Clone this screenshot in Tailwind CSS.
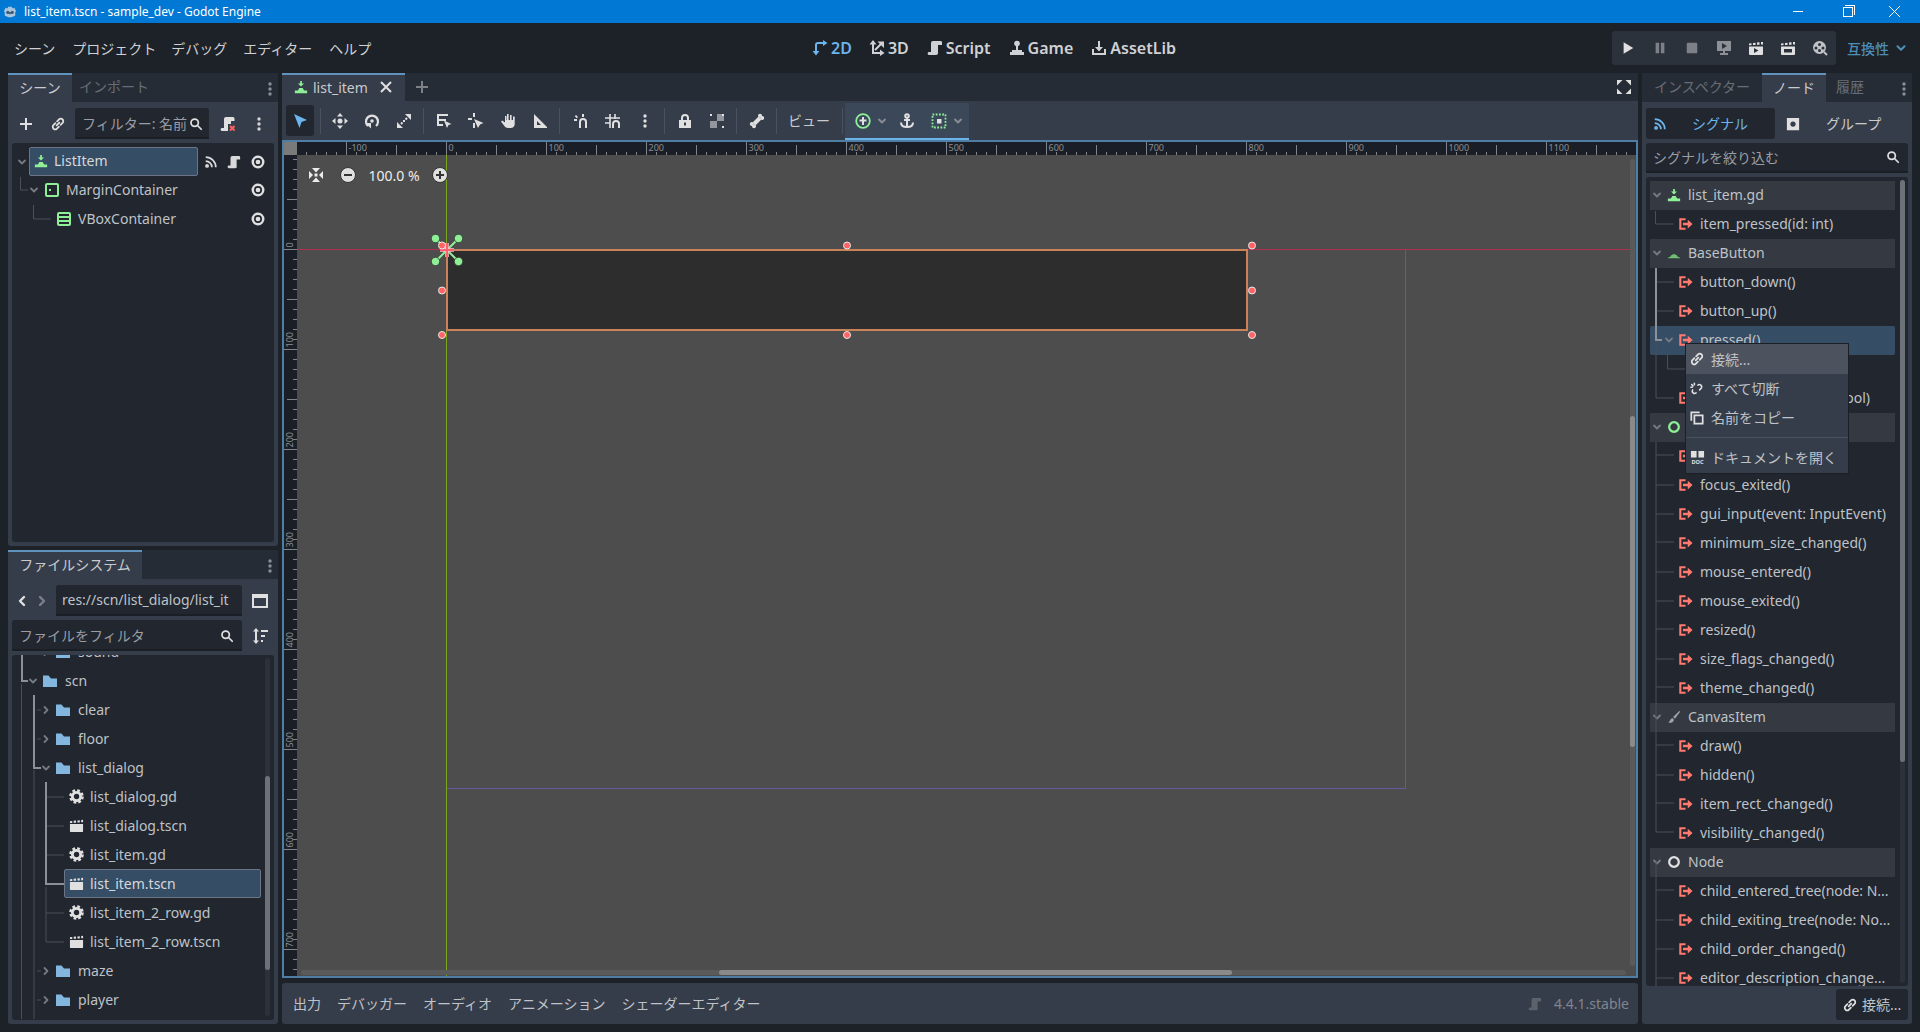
<!DOCTYPE html>
<html lang="ja">
<head>
<meta charset="UTF-8">
<title>list_item.tscn - sample_dev - Godot Engine</title>
<script src="https://cdn.jsdelivr.net/npm/@tailwindcss/browser@4"></script>
</head>
<body class="w-[1920px] h-[1032px] overflow-hidden bg-[#1d2229] text-[14px] text-[#bfc2c7] font-['Noto_Sans','Noto_Sans_CJK_JP',sans-serif] flex flex-col">

<!-- icon set -->
<svg class="hidden">
  <symbol id="godot" viewBox="0 0 16 16"><path fill="currentColor" d="M3 3l2 1 1-2h4l1 2 2-1 2 4-1 1v4c-2 1.500-4 2-6 2s-4-.5-6-2V8L1 7z"/><circle cx="5.500" cy="8.500" r="1.800" fill="#3a5a78"/><circle cx="10.500" cy="8.500" r="1.800" fill="#3a5a78"/><rect x="7" y="8" width="2" height="2.500" fill="#3a5a78"/></symbol>
  <symbol id="plus" viewBox="0 0 16 16"><path fill="currentColor" d="M7 2h2v5h5v2H9v5H7V9H2V7h5z"/></symbol>
  <symbol id="link" viewBox="0 0 16 16"><g fill="none" stroke="currentColor" stroke-width="2" stroke-linecap="round"><path d="M7 5l2.200-2.200a2.700 2.700 0 0 1 4 4L11 9"/><path d="M9 11l-2.200 2.200a2.700 2.700 0 0 1-4-4L5 7"/><path d="M6.500 9.500l3-3"/></g></symbol>
  <symbol id="unlink" viewBox="0 0 16 16"><g fill="none" stroke="currentColor" stroke-width="1.800" stroke-linecap="round"><path d="M9 3.500a2.700 2.700 0 0 1 4 3.500L11 9"/><path d="M7 12.500a2.700 2.700 0 0 1-4-3.500"/><path d="M2 3l1.500 1.500M5 1.500V3M1 6h1.500"/></g></symbol>
  <symbol id="search" viewBox="0 0 16 16"><g fill="none" stroke="currentColor" stroke-width="2" stroke-linecap="round"><circle cx="6.500" cy="6.500" r="4.200"/><path d="M10 10l4 4"/></g></symbol>
  <symbol id="kebab" viewBox="0 0 16 16"><g fill="currentColor"><circle cx="8" cy="3" r="1.700"/><circle cx="8" cy="8" r="1.700"/><circle cx="8" cy="13" r="1.700"/></g></symbol>
  <symbol id="chevd" viewBox="0 0 16 16"><path fill="none" stroke="currentColor" stroke-width="2.400" stroke-linecap="round" stroke-linejoin="round" d="M4 6l4 4 4-4"/></symbol>
  <symbol id="chevr" viewBox="0 0 16 16"><path fill="none" stroke="currentColor" stroke-width="2.400" stroke-linecap="round" stroke-linejoin="round" d="M6 4l4 4-4 4"/></symbol>
  <symbol id="eye" viewBox="0 0 16 16"><circle cx="8" cy="8" r="6" fill="none" stroke="currentColor" stroke-width="2.800"/><circle cx="8" cy="8" r="2.700" fill="currentColor"/></symbol>
  <symbol id="signal" viewBox="0 0 16 16"><circle cx="3.500" cy="12.500" r="2.200" fill="currentColor"/><g fill="none" stroke="currentColor" stroke-width="2"><path d="M2 7a7 7 0 0 1 7 7"/><path d="M2 2.500A11.500 11.500 0 0 1 13.500 14"/></g></symbol>
  <symbol id="script" viewBox="0 0 16 16"><path fill="currentColor" d="M6 1h8a1.500 1.500 0 0 1 1 1.500V5h-4v7.500A2 2 0 0 1 9 15H2a1.500 1.500 0 0 1-1-2.500c.3-.4.800-.5 1.500-.5H4V3a2 2 0 0 1 2-2z"/></symbol>
  <symbol id="scriptx" viewBox="0 0 16 16"><path fill="#e0e0e0" d="M6 1h7a1.500 1.500 0 0 1 1.500 1.500V5H11v3H8v7H2a1.500 1.500 0 0 1-1-2.500c.3-.4.800-.5 1.500-.5H4V3a2 2 0 0 1 2-2z"/><path fill="none" stroke="#ff5f5f" stroke-width="2" d="M10 10l4.500 4.500M14.500 10L10 14.500"/></symbol>
  <symbol id="node-root" viewBox="0 0 16 16"><path fill="currentColor" d="M7 1h2v3h2.500L8 7.500 4.500 4H7zM6 9h4l1.500 3H15v3H1v-3h3.500z"/></symbol>
  <symbol id="node-dome" viewBox="0 0 16 16"><path fill="currentColor" d="M1 14c.5-1 1-1.500 2.500-1.500C4.500 10.500 6 9.500 8 9.500s3.500 1 4.500 3c1.500 0 2 .5 2.500 1.500z"/></symbol>
  <symbol id="margin" viewBox="0 0 16 16"><rect x="2" y="2" width="12" height="12" rx="1" fill="none" stroke="currentColor" stroke-width="2"/><rect x="5" y="7" width="2" height="2" fill="currentColor"/></symbol>
  <symbol id="vbox" viewBox="0 0 16 16"><g fill="none" stroke="currentColor" stroke-width="2"><rect x="2" y="2" width="12" height="12" rx="1"/><path d="M2 6h12M2 10h12"/></g></symbol>
  <symbol id="folder" viewBox="0 0 16 16"><path fill="currentColor" d="M1 2.500h5.500L9 5.500h6V14H1z"/></symbol>
  <symbol id="gear" viewBox="0 0 16 16"><circle cx="8" cy="8" r="4.400" fill="none" stroke="currentColor" stroke-width="3"/><circle cx="8" cy="8" r="6.500" fill="none" stroke="currentColor" stroke-width="2.600" stroke-dasharray="2.900 2.200"/></symbol>
  <symbol id="clap" viewBox="0 0 16 16"><path fill="currentColor" d="M1 6.500h14V14a1 1 0 0 1-1 1H2a1 1 0 0 1-1-1z"/><path fill="currentColor" d="M1 3.500l2.500-.3v2H1zM5 3l2.500-.3v2.300H5zM9 2.600l2.500-.3v2.500H9zM13 2.100l2-.2v2.700h-2z"/></symbol>
  <symbol id="clapplay" viewBox="0 0 16 16"><path fill="currentColor" d="M1 6.500h14V14a1 1 0 0 1-1 1H2a1 1 0 0 1-1-1zM6 8v5l4.500-2.500z" fill-rule="evenodd"/><path fill="currentColor" d="M1 3.500l2.500-.3v2H1zM5 3l2.500-.3v2.300H5zM9 2.600l2.500-.3v2.500H9zM13 2.100l2-.2v2.700h-2z"/></symbol>
  <symbol id="clapopen" viewBox="0 0 16 16"><path fill="currentColor" d="M1 6.500h14V14a1 1 0 0 1-1 1H2a1 1 0 0 1-1-1zM4 9v3.500h8V9z" fill-rule="evenodd"/><path fill="currentColor" d="M1 3.500l2.500-.3v2H1zM5 3l2.500-.3v2.300H5zM9 2.600l2.500-.3v2.500H9zM13 2.100l2-.2v2.700h-2z"/></symbol>
  <symbol id="movie" viewBox="0 0 16 16"><path fill="currentColor" fill-rule="evenodd" d="M7.500 1a6.500 6.500 0 1 1 0 13 6.500 6.500 0 0 1 0-13zM7.500 3a1.500 1.500 0 1 0 0 3 1.500 1.500 0 0 0 0-3zM4 6.500a1.500 1.500 0 1 0 0 3 1.500 1.500 0 0 0 0-3zM11 6.500a1.500 1.500 0 1 0 0 3 1.500 1.500 0 0 0 0-3zM7.500 9a1.500 1.500 0 1 0 0 3 1.500 1.500 0 0 0 0-3z"/><path stroke="currentColor" stroke-width="2" d="M12 12l3 3"/></symbol>
  <symbol id="play" viewBox="0 0 16 16"><path fill="currentColor" d="M3 1.500l11 6.500-11 6.500z"/></symbol>
  <symbol id="pause" viewBox="0 0 16 16"><path fill="currentColor" d="M3 2h4v12H3zM9 2h4v12H9z"/></symbol>
  <symbol id="stop" viewBox="0 0 16 16"><rect x="2" y="2" width="12" height="12" rx="1" fill="currentColor"/></symbol>
  <symbol id="remote" viewBox="0 0 16 16"><path fill="currentColor" fill-rule="evenodd" d="M1 1h14v10H9v2h3v2H4v-2h3v-2H1zM6 3v6l5-3z"/></symbol>
  <symbol id="d2" viewBox="0 0 16 16"><path fill="none" stroke="currentColor" stroke-width="2" d="M4 12V5a2 2 0 0 1 2-2h5"/><path fill="currentColor" d="M11 0l4.500 3L11 6zM.5 11h7L4 15.500z"/></symbol>
  <symbol id="d3" viewBox="0 0 16 16"><path fill="none" stroke="currentColor" stroke-width="2" d="M4 4v9h7M13 3L6 10"/><path fill="currentColor" d="M4 0l3.500 4.500h-7zM11 9.500l4.500 3.500-4.500 3zM8.500 1.500H15V8z"/></symbol>
  <symbol id="game" viewBox="0 0 16 16"><circle cx="8" cy="3.500" r="2.800" fill="currentColor"/><path fill="currentColor" d="M7 5h2v5h4v2h2v3H1v-3h2v-2h4z"/></symbol>
  <symbol id="asset" viewBox="0 0 16 16"><path fill="currentColor" d="M7 1h2v6h3l-4 4.500L4 7h3zM1 9h2v4h10V9h2v6H1z"/></symbol>
  <symbol id="cursor" viewBox="0 0 16 16"><path fill="currentColor" d="M2 1l13 6-5.500 2L7.500 15z"/></symbol>
  <symbol id="move" viewBox="0 0 16 16"><path fill="currentColor" d="M8 0l3 3.500H5zM8 16l-3-3.500h6zM0 8l3.500-3v6zM16 8l-3.500 3V5z"/><circle cx="8" cy="8" r="2.500" fill="currentColor"/></symbol>
  <symbol id="rotate" viewBox="0 0 16 16"><path fill="none" stroke="currentColor" stroke-width="2.200" d="M4 13a6 6 0 1 1 8 0"/><circle cx="8" cy="8" r="1.800" fill="currentColor"/><path fill="currentColor" d="M1 10h6v5.500z"/></symbol>
  <symbol id="scale" viewBox="0 0 16 16"><path fill="currentColor" d="M9 1h6v6zM1 9l6 6H1z"/><path stroke="currentColor" stroke-width="2" d="M11 5L9.500 6.500M5 11l1.500-1.500"/><rect x="7" y="7" width="2" height="2" fill="currentColor"/></symbol>
  <symbol id="listsel" viewBox="0 0 16 16"><path fill="currentColor" d="M1 1h11v2H3v3h7v2H3v3h4v2H1z"/><path fill="currentColor" d="M8 7.500l7.500 3.500-3 1-1.500 3z"/></symbol>
  <symbol id="pivot" viewBox="0 0 16 16"><path fill="currentColor" d="M5 0h2v4H5zM0 5h4v2H0z"/><path fill="currentColor" d="M6 6l9.500 4-3.500 1.500L10 15z"/><path fill="currentColor" d="M5 10h2v5H5z"/></symbol>
  <symbol id="pan" viewBox="0 0 16 16"><path fill="currentColor" d="M7 1h1.600v6H10V2h1.600v5H13V3.500h1.700V11c0 2.500-1.800 4-4 4H8c-2 0-3-1-4-2.500L1 8.500l1.300-1L5 9.500V3h1.500v4H7z"/></symbol>
  <symbol id="ruler" viewBox="0 0 16 16"><path fill="currentColor" fill-rule="evenodd" d="M2 1l13 13v1H2zM5 8v4h4z"/></symbol>
  <symbol id="snap" viewBox="0 0 16 16"><path fill="none" stroke="currentColor" stroke-width="2" d="M7 15V9a3 3 0 0 1 6 0v6"/><path fill="currentColor" d="M9 1h2v3H9zM1 6h3v2H1zM3 2l2 2-1.200 1.200-2-2z"/></symbol>
  <symbol id="grid" viewBox="0 0 16 16"><path stroke="currentColor" stroke-width="1.600" fill="none" d="M5 1v14M10 1v5M0 5h15M0 10h5"/><path fill="none" stroke="currentColor" stroke-width="2" d="M8 15v-4a3 3 0 0 1 6 0v4"/></symbol>
  <symbol id="lock" viewBox="0 0 16 16"><path fill="none" stroke="currentColor" stroke-width="2" d="M5 8V5a3 3 0 0 1 6 0v3"/><path fill="currentColor" fill-rule="evenodd" d="M2 7h12v8H2zM7 9.500v3h2v-3z"/></symbol>
  <symbol id="grp" viewBox="0 0 16 16"><path fill="currentColor" opacity=".55" d="M1 8h7V1h7v7H8v7H1z"/><path fill="currentColor" d="M1 1h2v2H1zM13 13h2v2h-2zM13 1h2v2h-2z"/></symbol>
  <symbol id="bone" viewBox="0 0 16 16"><path stroke="currentColor" stroke-width="4" d="M5 11l6-6"/><g fill="currentColor"><circle cx="11" cy="2.800" r="2"/><circle cx="13.200" cy="5" r="2"/><circle cx="2.800" cy="11" r="2"/><circle cx="5" cy="13.200" r="2"/></g></symbol>
  <symbol id="anchor" viewBox="0 0 16 16"><g fill="none" stroke="currentColor" stroke-width="2"><circle cx="8" cy="3" r="1.800"/><path d="M8 5v9M5 7h6M2 9.500c0 3 2.500 4.500 6 4.500s6-1.500 6-4.500"/></g></symbol>
  <symbol id="container" viewBox="0 0 16 16"><rect x="1.500" y="1.500" width="13" height="13" fill="none" stroke="#8eef97" stroke-width="1.800" stroke-dasharray="1.800 1.450"/><rect x="6" y="6" width="4.500" height="4.500" fill="#e0e0e0"/></symbol>
  <symbol id="ringplus" viewBox="0 0 16 16"><circle cx="8" cy="8" r="6.800" fill="none" stroke="#8eef97" stroke-width="1.800"/><path fill="#e0e0e0" d="M7 4h2v2.500h2.500v2H9V12H7V8.500H4.500v-2H7z"/></symbol>
  <symbol id="expand" viewBox="0 0 16 16"><path fill="currentColor" d="M1 1h5.500L1 6.500zM15 1v5.500L9.500 1zM1 15V9.500L6.500 15zM15 15H9.500L15 9.500z"/></symbol>
  <symbol id="center" viewBox="0 0 16 16"><path fill="currentColor" d="M4 1h8L8 5.500zM4 15h8L8 10.500zM1 4l4 4-4 4zM15 4l-4 4 4 4z"/><rect x="6.500" y="6.500" width="3" height="3" fill="currentColor"/></symbol>
  <symbol id="sig" viewBox="0 0 16 16"><path fill="none" stroke="currentColor" stroke-width="2.400" d="M7.500 2.500H1.500v11h6"/><path fill="currentColor" d="M4.500 6.500H10V3l5.500 5L10 13V9.500H4.500z"/></symbol>
  <symbol id="ring" viewBox="0 0 16 16"><circle cx="8" cy="8" r="5.500" fill="none" stroke="currentColor" stroke-width="2.600"/></symbol>
  <symbol id="brush" viewBox="0 0 16 16"><path fill="currentColor" d="M14 1l1 1-6 8-2-2zM6 9l2 2c-1 3-3 4-6.500 3.500C3 13.500 3.500 10 6 9z"/></symbol>
  <symbol id="group" viewBox="0 0 16 16"><path fill="currentColor" fill-rule="evenodd" d="M1 1h14v14H1zM8 5a3 3 0 1 0 0 6 3 3 0 0 0 0-6z"/></symbol>
  <symbol id="split" viewBox="0 0 16 16"><path fill="none" stroke="currentColor" stroke-width="2" d="M1 2h14v12H1zM1 4h14"/></symbol>
  <symbol id="sort" viewBox="0 0 16 16"><path fill="currentColor" d="M4 0l3 3.500H5v9h2L4 16l-3-3.500h2v-9H1zM9 2h7v2H9zM9 7h4v2H9zM9 12h2v2H9z"/></symbol>
  <symbol id="copy" viewBox="0 0 16 16"><path fill="none" stroke="currentColor" stroke-width="2" d="M1.500 11V1.500H11M5 5h9.500v9.500H5z"/></symbol>
  <symbol id="doc" viewBox="0 0 16 16"><path fill="currentColor" d="M1 1h6v7H1zM9 1h6v7H9z"/><text x="8" y="15" font-size="6" font-weight="700" text-anchor="middle" fill="currentColor" font-family="Noto Sans">DOC</text></symbol>
</svg>

<!-- title bar -->
<header class="h-[23px] shrink-0 bg-[#0078d4] text-white text-[12px] flex items-center">
  <svg class="w-[14px] h-[14px] ml-[3px] text-[#a9c6dd]"><use href="#godot"/></svg>
  <span class="ml-[7px]">list_item.tscn - sample_dev - Godot Engine</span>
  <div class="ml-auto flex items-center">
    <span class="w-[10px] h-px bg-white mr-[40px]"></span>
    <span class="relative w-[10px] h-[10px] border border-white mr-[36px]"><span class="absolute -top-[3px] left-[1px] w-[10px] h-[10px] border-t border-r border-white"></span></span>
    <svg class="w-[11px] h-[11px] mr-[20px]" viewBox="0 0 11 11"><path stroke="#fff" d="M0 0l11 11M11 0L0 11"/></svg>
  </div>
</header>

<!-- menu bar -->
<nav class="h-[50px] shrink-0 flex items-center text-[#cfd1d4]">
  <div class="w-[800px] flex pl-[14px]">
    <span>シーン</span><span class="ml-[17px]">プロジェクト</span><span class="ml-[15px]">デバッグ</span><span class="ml-[16px]">エディター</span><span class="ml-[17px]">ヘルプ</span>
  </div>
  <div class="flex items-center text-[16px] font-semibold pl-[12px]">
    <svg class="w-4 h-4 text-[#6cb4ec]"><use href="#d2"/></svg><span class="ml-[3px] text-[#6cb4ec]">2D</span>
    <svg class="w-4 h-4 ml-[17px]"><use href="#d3"/></svg><span class="ml-[3px]">3D</span>
    <svg class="w-4 h-4 ml-[18px]"><use href="#script"/></svg><span class="ml-[3px]">Script</span>
    <svg class="w-4 h-4 ml-[18px]"><use href="#game"/></svg><span class="ml-[3px]">Game</span>
    <svg class="w-4 h-4 ml-[18px]"><use href="#asset"/></svg><span class="ml-[3px]">AssetLib</span>
  </div>
  <div class="ml-auto flex items-center">
    <div class="w-[224px] h-[34px] rounded-[3px] bg-[#2c323c] flex items-center text-[#e0e0e0]">
      <span class="w-8 flex justify-center"><svg class="w-[14px] h-[14px]"><use href="#play"/></svg></span>
      <span class="w-8 flex justify-center"><svg class="w-[14px] h-[14px] text-[#7d8087]"><use href="#pause"/></svg></span>
      <span class="w-8 flex justify-center"><svg class="w-[14px] h-[14px] text-[#7d8087]"><use href="#stop"/></svg></span>
      <span class="w-8 flex justify-center"><svg class="w-4 h-4 text-[#8d9096]"><use href="#remote"/></svg></span>
      <span class="w-8 flex justify-center"><svg class="w-4 h-4"><use href="#clapplay"/></svg></span>
      <span class="w-8 flex justify-center"><svg class="w-4 h-4"><use href="#clapopen"/></svg></span>
      <span class="w-8 flex justify-center"><svg class="w-4 h-4 text-[#c0c2c5]"><use href="#movie"/></svg></span>
    </div>
    <span class="ml-[11px] text-[#4e8db4] font-medium">互換性</span>
    <svg class="w-[14px] h-[14px] ml-[5px] mr-[12px] text-[#4e8db4]"><use href="#chevd"/></svg>
  </div>
</nav>

<main class="h-[951px] shrink-0 flex gap-[4px] px-[8px]">

  <!-- left docks -->
  <div class="w-[270px] flex flex-col gap-[4px]">
    <section class="h-[473px] flex flex-col bg-[#363d4a] rounded-b-[3px]">
      <div class="h-[29px] shrink-0 flex items-stretch bg-[#262c36]">
        <div class="w-[64px] pb-[2px] border-t-2 border-[#5f93bd] bg-[#363d4a] flex items-center justify-center text-[#c9cbcf]">シーン</div>
        <div class="w-[84px] pb-[2px] flex items-center justify-center text-[#686d75]">インポート</div>
        <svg class="w-4 h-4 ml-auto mt-[8px] text-[#8a8e95]"><use href="#kebab"/></svg>
      </div>
      <div class="h-[31px] mt-[6px] shrink-0 flex items-center pl-[10px]">
        <svg class="w-4 h-4 text-[#e0e0e0]"><use href="#plus"/></svg>
        <svg class="w-[14px] h-[14px] ml-[17px] text-[#e0e0e0]"><use href="#link"/></svg>
        <div class="w-[134px] h-[31px] ml-[10px] pt-[2px] bg-[#21262f] border-b-2 border-[#1a1e25] rounded-t-[3px] flex items-center pl-[7px] pr-[6px] overflow-hidden">
          <span class="flex-1 whitespace-nowrap overflow-hidden text-[#9a9da3]">フィルター: 名前</span>
          <svg class="w-[14px] h-[14px] shrink-0 text-[#e0e0e0]"><use href="#search"/></svg>
        </div>
        <svg class="w-4 h-4 ml-[11px]"><use href="#scriptx"/></svg>
        <svg class="w-4 h-4 ml-[15px] text-[#d4d5d7]"><use href="#kebab"/></svg>
      </div>
      <div class="relative flex-1 mx-[4px] mt-[4px] mb-[4px] pt-[4px] bg-[#21262f] rounded-[3px]">
        <svg class="absolute top-0 left-0 w-[262px] h-[395px] pointer-events-none" viewBox="12 143 262 395"><path fill="none" stroke="#4a4f58" d="M20.500 177v13H28M33.500 205v14H51"/></svg>
        <div class="relative h-[29px] flex items-center">
          <svg class="w-3 h-3 ml-[4px] text-[#767a81]"><use href="#chevd"/></svg>
          <div class="ml-[1px] w-[169px] h-[29px] pb-[2px] bg-[#364d66] border border-[#6b7585] rounded-[2px] flex items-center pl-[4px]">
            <svg class="w-[14px] h-[14px] text-[#8eef97]"><use href="#node-root"/></svg><span class="ml-[6px] text-[#d6d8da]">ListItem</span>
          </div>
          <svg class="w-[14px] h-[14px] ml-[6px] text-[#d8d9db]"><use href="#signal"/></svg>
          <svg class="w-[14px] h-[14px] ml-[9px] text-[#d8d9db]"><use href="#script"/></svg>
          <svg class="w-[14px] h-[14px] ml-[10px] text-[#e0e0e0]"><use href="#eye"/></svg>
        </div>
        <div class="relative h-[29px] pb-[2px] flex items-center">
          <svg class="w-3 h-3 ml-[16px] text-[#767a81]"><use href="#chevd"/></svg>
          <svg class="w-4 h-4 ml-[4px] text-[#8eef97]"><use href="#margin"/></svg><span class="ml-[6px]">MarginContainer</span>
          <svg class="w-[14px] h-[14px] ml-auto mr-[9px] text-[#e0e0e0]"><use href="#eye"/></svg>
        </div>
        <div class="relative h-[29px] pb-[2px] flex items-center">
          <svg class="w-4 h-4 ml-[44px] text-[#8eef97]"><use href="#vbox"/></svg><span class="ml-[6px]">VBoxContainer</span>
          <svg class="w-[14px] h-[14px] ml-auto mr-[9px] text-[#e0e0e0]"><use href="#eye"/></svg>
        </div>
      </div>
    </section>

    <section class="flex-1 flex flex-col bg-[#363d4a] rounded-b-[3px] min-h-0">
      <div class="h-[29px] shrink-0 flex items-stretch bg-[#262c36]">
        <div class="w-[134px] pb-[2px] border-t-2 border-[#5f93bd] bg-[#363d4a] flex items-center justify-center text-[#c9cbcf]">ファイルシステム</div>
        <svg class="w-4 h-4 ml-auto mt-[8px] text-[#8a8e95]"><use href="#kebab"/></svg>
      </div>
      <div class="h-[31px] mt-[6px] shrink-0 flex items-center pl-[6px]">
        <svg class="w-4 h-4 text-[#e0e0e0] rotate-180"><use href="#chevr"/></svg>
        <svg class="w-4 h-4 ml-[4px] text-[#7d8087]"><use href="#chevr"/></svg>
        <div class="w-[186px] h-[31px] ml-[6px] pl-[6px] bg-[#21262f] border-b-2 border-[#1a1e25] rounded-t-[3px] flex items-center overflow-hidden whitespace-nowrap">res://scn/list_dialog/list_it</div>
        <svg class="w-4 h-4 ml-[10px] text-[#e0e0e0]"><use href="#split"/></svg>
      </div>
      <div class="h-[31px] mt-[4px] shrink-0 flex items-center pl-[4px]">
        <div class="w-[230px] h-[31px] pt-[2px] pl-[7px] pr-[8px] bg-[#21262f] border-b-2 border-[#1a1e25] rounded-t-[3px] flex items-center justify-between">
          <span class="text-[#9a9da3]">ファイルをフィルタ</span><svg class="w-[14px] h-[14px] text-[#e0e0e0]"><use href="#search"/></svg>
        </div>
        <svg class="w-4 h-4 ml-[10px] text-[#e0e0e0]"><use href="#sort"/></svg>
      </div>
      <div class="relative flex-1 mx-[4px] mt-[4px] mb-[4px] bg-[#21262f] rounded-[3px] overflow-hidden min-h-0">
        <div id="files" class="relative mt-[-18px]"></div>
        <svg class="absolute top-0 left-0 w-[262px] h-[364px] pointer-events-none" viewBox="12 655 262 364"><g fill="none"><path stroke="#4a4f58" d="M21.500 684V1019M34 770V1019M37 710h4M37 739h4M37 971h4M37 1000h4M46 887v55h18M46 797h18M46 826h18M46 855h18M46 913h18"/><path stroke="#8c9097" stroke-width="2" d="M22 655v26h6M34 695v73h7M46 782v102h18"/></g></svg>
        <div class="absolute top-[3px] right-[4px] w-[5px] h-[358px] rounded-full bg-[#2c313a]"><div class="mt-[118px] h-[194px] rounded-full bg-[#6d7178]"></div></div>
      </div>
    </section>
  </div>

  <!-- centre -->
  <div class="w-[1356px] flex flex-col">
    <div class="h-[28px] shrink-0 flex items-center bg-[#262c36]">
      <div class="w-[123px] h-full pb-[2px] border-t-2 border-[#5f93bd] bg-[#363d4a] flex items-center pl-[12px] text-[#c9cbcf]">
        <svg class="w-[14px] h-[14px] text-[#8eef97]"><use href="#node-root"/></svg><span class="ml-[5px]">list_item</span>
        <svg class="w-3 h-3 ml-[12px] text-[#e0e0e0]" viewBox="0 0 12 12"><path stroke="currentColor" stroke-width="2" d="M1 1l10 10M11 1L1 11"/></svg>
      </div>
      <svg class="w-4 h-4 ml-[9px] text-[#7d8087]"><use href="#plus"/></svg>
      <svg class="w-4 h-4 ml-auto mr-[6px] text-[#e0e0e0]"><use href="#expand"/></svg>
    </div>

    <div class="h-[39px] shrink-0 bg-[#353c4a] flex items-center text-[#e0e0e0]">
      <button class="w-[28px] h-[31px] ml-[4px] bg-[#21262f] rounded-[3px] flex items-center justify-center"><svg class="w-4 h-4 text-[#6cb4ec]"><use href="#cursor"/></svg></button>
      <i class="w-px h-[26px] ml-[6px] mr-[3px] bg-[#4a515e]"></i>
      <button class="w-8 flex justify-center"><svg class="w-4 h-4"><use href="#move"/></svg></button>
      <button class="w-8 flex justify-center"><svg class="w-4 h-4"><use href="#rotate"/></svg></button>
      <button class="w-8 flex justify-center"><svg class="w-4 h-4"><use href="#scale"/></svg></button>
      <i class="w-px h-[26px] ml-[3px] mr-[4px] bg-[#4a515e]"></i>
      <button class="w-8 flex justify-center"><svg class="w-4 h-4"><use href="#listsel"/></svg></button>
      <button class="w-8 flex justify-center"><svg class="w-4 h-4"><use href="#pivot"/></svg></button>
      <button class="w-8 flex justify-center"><svg class="w-4 h-4"><use href="#pan"/></svg></button>
      <button class="w-8 flex justify-center"><svg class="w-4 h-4"><use href="#ruler"/></svg></button>
      <i class="w-px h-[26px] ml-[3px] mr-[5px] bg-[#4a515e]"></i>
      <button class="w-8 flex justify-center"><svg class="w-4 h-4"><use href="#snap"/></svg></button>
      <button class="w-8 flex justify-center"><svg class="w-4 h-4"><use href="#grid"/></svg></button>
      <button class="w-8 flex justify-center"><svg class="w-4 h-4"><use href="#kebab"/></svg></button>
      <i class="w-px h-[26px] ml-[3px] mr-[4px] bg-[#4a515e]"></i>
      <button class="w-8 flex justify-center"><svg class="w-4 h-4"><use href="#lock"/></svg></button>
      <button class="w-8 flex justify-center"><svg class="w-4 h-4"><use href="#grp"/></svg></button>
      <i class="w-px h-[26px] ml-[3px] mr-[4px] bg-[#4a515e]"></i>
      <button class="w-8 flex justify-center"><svg class="w-4 h-4"><use href="#bone"/></svg></button>
      <i class="w-px h-[26px] ml-[3px] mr-[11px] bg-[#4a515e]"></i>
      <span class="w-[39px] text-[#c9cbcf] whitespace-nowrap">ビュー</span>
      <i class="w-px h-[26px] ml-[15px] mr-[2px] bg-[#4a515e]"></i>
      <div class="w-[124px] self-end h-[37px] bg-[#3b4859] border-b-2 border-[#6cb4ec] flex items-center">
        <svg class="w-4 h-4 ml-[10px]"><use href="#ringplus"/></svg>
        <svg class="w-3 h-3 ml-[5px] text-[#8a8e95]"><use href="#chevd"/></svg>
        <svg class="w-4 h-4 ml-[11px]"><use href="#anchor"/></svg>
        <svg class="w-4 h-4 ml-[16px]"><use href="#container"/></svg>
        <svg class="w-3 h-3 ml-[5px] text-[#8a8e95]"><use href="#chevd"/></svg>
      </div>
    </div>

    <!-- viewport -->
    <div class="h-[838px] shrink-0 border-2 border-[#4f7da3] flex flex-col">
      <div class="h-[13px] shrink-0 flex">
        <div class="w-[13px] shrink-0 bg-[#7a7a7a]"></div>
        <svg id="rulerTop" class="flex-1 h-[13px] bg-[#1a1f27]"></svg>
      </div>
      <div class="flex-1 flex min-h-0">
        <svg id="rulerLeft" class="w-[13px] shrink-0 h-full bg-[#1a1f27]"></svg>
        <div class="relative flex-1 bg-[#4d4d4d] overflow-hidden">
          <!-- 2D scene, origin at 149,94 -->
          <div class="absolute left-[149px] top-[94px] w-[960px] h-[540px] border border-[#67589c]"></div>
          <div class="absolute left-0 top-[94px] w-full h-px bg-[#b0304e]"></div>
          <div class="absolute left-[149px] top-0 h-full w-px bg-[#7ca61c]"></div>
          <div class="absolute left-[149px] top-[94px] w-[802px] h-[82px] bg-[#2d2d2d] border-2 border-[#c9825a]"></div>
          <svg class="absolute left-[130px] top-[75px] w-[830px] h-[120px] overflow-visible" viewBox="0 0 830 120">
            <g fill="none" stroke="#8eef97" stroke-width="2"><path d="M20 20L8.500 8.500M20 20l11.500-11.500M20 20L8.500 31.500M20 20l11.500 11.500"/></g>
            <g fill="#8eef97" stroke="#2d3a2f" stroke-width=".8"><circle cx="8.500" cy="8.500" r="4.200"/><circle cx="31.500" cy="8.500" r="4.200"/><circle cx="8.500" cy="31.500" r="4.200"/><circle cx="31.500" cy="31.500" r="4.200"/></g>
            <path fill="none" stroke="#f8c8c8" stroke-width="3.500" d="M20 13v14M13 20h14"/>
            <path fill="none" stroke="#ff5f6f" stroke-width="2" d="M20 13v14M13 20h14"/>
            <g fill="#ff6363" stroke="#e8e8e8"><circle cx="15" cy="15.500" r="3.500"/><circle cx="15" cy="60.500" r="3.500"/><circle cx="15" cy="105" r="3.500"/><circle cx="420" cy="15.500" r="3.500"/><circle cx="420" cy="105" r="3.500"/><circle cx="825" cy="15.500" r="3.500"/><circle cx="825" cy="60.500" r="3.500"/><circle cx="825" cy="105" r="3.500"/></g>
          </svg>
          <!-- zoom widget -->
          <div class="absolute left-[11px] top-[12px] h-4 flex items-center text-[#ececec]">
            <svg class="w-4 h-4"><use href="#center"/></svg>
            <span class="ml-[16px] w-[16px] h-[16px] rounded-full bg-[#e0e0e0] border border-[#333] flex items-center justify-center"><i class="w-[8px] h-[2px] bg-[#333]"></i></span>
            <span class="ml-[5px] w-[66px] text-[14px] whitespace-nowrap text-center">100.0 %</span>
            <span class="ml-[5px] relative w-[16px] h-[16px] rounded-full bg-[#e0e0e0] border border-[#333] flex items-center justify-center"><i class="w-[8px] h-[2px] bg-[#333]"></i><i class="absolute w-[2px] h-[8px] bg-[#333]"></i></span>
          </div>
          <!-- scrollbars -->
          <div class="absolute left-[4px] right-[10px] bottom-[1px] h-[5px] rounded-full bg-[#5a5a5a]"><div class="ml-[418px] w-[513px] h-[5px] rounded-full bg-[#8a8a8a]"></div></div>
          <div class="absolute right-[1px] top-[4px] bottom-[10px] w-[5px] rounded-full bg-[#5a5a5a]"><div class="mt-[257px] h-[331px] w-[5px] rounded-full bg-[#8a8a8a]"></div></div>
        </div>
      </div>
    </div>

    <div class="h-[41px] mt-[5px] shrink-0 bg-[#353c4a] rounded-[3px] flex items-center text-[#c0c3c8] pl-[11px] pr-[9px]">
      <span>出力</span><span class="ml-[16px]">デバッガー</span><span class="ml-[16px]">オーディオ</span><span class="ml-[16px]">アニメーション</span><span class="ml-[16px]">シェーダーエディター</span>
      <svg class="w-[14px] h-[14px] ml-auto text-[#5c626c]"><use href="#script"/></svg>
      <span class="ml-[12px] text-[#80868f]">4.4.1.stable</span>
    </div>
  </div>

  <!-- right dock -->
  <section class="w-[270px] flex flex-col bg-[#363d4a] rounded-b-[3px]">
    <div class="h-[29px] shrink-0 flex items-stretch bg-[#262c36] text-[#686d75]">
      <div class="w-[120px] pb-[2px] flex items-center justify-center">インスペクター</div>
      <div class="w-[64px] pb-[2px] border-t-2 border-[#5f93bd] bg-[#363d4a] flex items-center justify-center text-[#c9cbcf]">ノード</div>
      <div class="w-[48px] pb-[2px] flex items-center justify-center">履歴</div>
      <svg class="w-4 h-4 ml-auto mt-[8px] text-[#8a8e95]"><use href="#kebab"/></svg>
    </div>
    <div class="h-[31px] mt-[6px] ml-[4px] shrink-0 flex items-center">
      <div class="w-[129px] h-[31px] bg-[#21262f] rounded-[3px] flex items-center pl-[7px] text-[#6cb4ec]">
        <svg class="w-[14px] h-[14px]"><use href="#signal"/></svg><span class="ml-[25px]">シグナル</span>
      </div>
      <svg class="w-[14px] h-[14px] ml-[11px] text-[#e0e0e0]"><use href="#group"/></svg><span class="ml-[26px] text-[#c9cbcf]">グループ</span>
    </div>
    <div class="h-[30px] mt-[4px] mx-[4px] shrink-0 bg-[#21262f] border-b-2 border-[#1a1e25] rounded-t-[3px] flex items-center justify-between pl-[7px] pr-[8px]">
      <span class="text-[#9a9da3]">シグナルを絞り込む</span><svg class="w-[14px] h-[14px] text-[#e0e0e0]"><use href="#search"/></svg>
    </div>
    <div class="relative h-[809px] mt-[4px] mx-[4px] shrink-0 bg-[#21262f] rounded-[3px] overflow-hidden">
      <div id="signals" class="pt-[4px] pl-[4px] pr-[13px]"></div>
      <svg class="absolute top-0 left-0 w-[262px] h-[809px] pointer-events-none" viewBox="1646 177 262 809"><g fill="none" stroke="#4a4f58"><path d="M1655.500 211v13h18M1656 340v58h18M1667.500 355v14h18M1656 282h18M1656 311h18M1656 442V832M1656 455h18M1656 485h18M1656 514h18M1656 542h18M1656 572h18M1656 601h18M1656 629h18M1656 659h18M1656 687h18M1656 745h18M1656 775h18M1656 803h18M1656 832h18M1656 862v124M1656 890h18M1656 920h18M1656 949h18M1656 978h18"/><path stroke="#8c9097" stroke-width="2" d="M1656 268v72h6"/></g></svg>
      <div class="absolute top-[3px] right-[3px] w-[5px] h-[803px] rounded-full bg-[#2c313a]"><div class="h-[582px] rounded-full bg-[#6d7178]"></div></div>
    </div>
    <div class="flex justify-end mt-[3px] mr-[4px]">
      <div class="w-[72px] h-[31px] bg-[#21262f] rounded-[3px] flex items-center pl-[7px]">
        <svg class="w-[14px] h-[14px] text-[#e0e0e0]"><use href="#link"/></svg><span class="ml-[5px] text-[#c0c3c8]">接続...</span>
      </div>
    </div>
  </section>
</main>

<!-- context menu -->
<div class="absolute left-[1685px] top-[343px] w-[164px] h-[131px] bg-[#363d4a] border border-[#1c2026] text-[#bfc2c7]">
  <div class="h-[30px] bg-[#4d535e] flex items-center pl-[4px]"><svg class="w-[14px] h-[14px] text-[#e0e0e0]"><use href="#link"/></svg><span class="ml-[7px]">接続...</span></div>
  <div class="h-[29px] flex items-center pl-[4px]"><svg class="w-[14px] h-[14px] text-[#e0e0e0]"><use href="#unlink"/></svg><span class="ml-[7px]">すべて切断</span></div>
  <div class="h-[29px] flex items-center pl-[4px]"><svg class="w-[14px] h-[14px] text-[#e0e0e0]"><use href="#copy"/></svg><span class="ml-[7px]">名前をコピー</span></div>
  <div class="h-px mt-[5px] mb-[7px] bg-[#4a515e]"></div>
  <div class="h-[24px] flex items-center pl-[4px]"><svg class="w-[15px] h-[15px] text-[#e0e0e0]"><use href="#doc"/></svg><span class="ml-[6px]">ドキュメントを開く</span></div>
</div>

<script>
  const icon = (id, cls) => `<svg class="${cls}"><use href="#${id}"/></svg>`;

  // file tree
  const files = [
    ["folder", 2, "sound", "r"], ["folder", 1, "scn", "d"], ["folder", 2, "clear", "r"], ["folder", 2, "floor", "r"],
    ["folder", 2, "list_dialog", "d"], ["gear", 3, "list_dialog.gd"], ["clap", 3, "list_dialog.tscn"], ["gear", 3, "list_item.gd"],
    ["clap", 3, "list_item.tscn", "", true], ["gear", 3, "list_item_2_row.gd"], ["clap", 3, "list_item_2_row.tscn"],
    ["folder", 2, "maze", "r"], ["folder", 2, "player", "r"],
  ];
  document.getElementById("files").innerHTML = files.map(([id, depth, name, chev, sel]) => {
    const pad = depth === 1 ? "pl-[15px]" : depth === 2 ? "pl-[28px]" : "pl-[57px]";
    const chevron = chev ? icon(chev === "d" ? "chevd" : "chevr", "w-3 h-3 text-[#767a81] mr-[3px]") : "";
    const ic = id === "folder" ? icon("folder", "w-4 h-4 text-[#84b7e0]") : icon(id, "w-[15px] h-[15px] text-[#e0e0e0]");
    const gap = id === "folder" ? "ml-[7px]" : "ml-[6px]";
    if (sel) return `<div class="h-[29px] ${pad} flex items-center"><div class="w-[197px] h-[29px] -ml-[5px] pl-[4px] bg-[#364d66] border border-[#6b7585] rounded-[2px] flex items-center">${ic}<span class="${gap} text-[#d6d8da]">${name}</span></div></div>`;
    return `<div class="h-[29px] ${pad} flex items-center">${chevron}${ic}<span class="${gap}">${name}</span></div>`;
  }).join("");

  // signal tree: h = class header, s = signal
  const sigs = [
    ["h", "list_item.gd", "node-root", "text-[#8eef97]"], ["s", "item_pressed(id: int)"],
    ["h", "BaseButton", "node-dome", "text-[#70bf73]"], ["s", "button_down()"], ["s", "button_up()"], ["p", "pressed()"], ["e", ""], ["s", "toggled(toggled_on: bool)"],
    ["h", "Control", "ring", "text-[#8eef97]"], ["s", "focus_entered()"], ["s", "focus_exited()"], ["s", "gui_input(event: InputEvent)"], ["s", "minimum_size_changed()"], ["s", "mouse_entered()"], ["s", "mouse_exited()"], ["s", "resized()"], ["s", "size_flags_changed()"], ["s", "theme_changed()"],
    ["h", "CanvasItem", "brush", "text-[#a0a3a8]"], ["s", "draw()"], ["s", "hidden()"], ["s", "item_rect_changed()"], ["s", "visibility_changed()"],
    ["h", "Node", "ring", "text-[#e0e0e0]"], ["s", "child_entered_tree(node: N..."], ["s", "child_exiting_tree(node: No..."], ["s", "child_order_changed()"], ["s", "editor_description_change..."],
  ];
  document.getElementById("signals").innerHTML = sigs.map(([kind, name, id, color]) => {
    if (kind === "e") return `<div class="h-[29px]"></div>`;
    if (kind === "h") return `<div class="h-[29px] pb-[2px] bg-[#343942] flex items-center pl-[1px]">${icon("chevd", "w-3 h-3 text-[#767a81]")}${icon(id, "w-[14px] h-[14px] ml-[4px] " + color)}<span class="ml-[7px]">${name}</span></div>`;
    const out = icon("sig", "w-[14px] h-[14px] text-[#ff7a6e]");
    if (kind === "p") return `<div class="h-[29px] pb-[2px] bg-[#364d66] rounded-[2px] flex items-center pl-[13px]">${icon("chevd", "w-3 h-3 text-[#767a81] mr-[4px]")}${out}<span class="ml-[7px]">${name}</span></div>`;
    return `<div class="h-[29px] pb-[2px] flex items-center pl-[29px] whitespace-nowrap">${out}<span class="ml-[7px]">${name}</span></div>`;
  }).join("");

  // rulers
  const tickColor = "#80848a";
  let rulerTop = "", rulerLeft = "";
  for (let k = -14; k <= 119; k++) {
    const x = 149.5 + k * 10;
    const h = k % 10 === 0 ? 13 : k % 5 === 0 ? 10 : 3;
    rulerTop += `<path d="M${x} ${13 - h}V13" stroke="${tickColor}"/>`;
    if (k % 10 === 0) rulerTop += `<text x="${x + 2}" y="9" font-size="9" fill="#8b8e92">${k * 10}</text>`;
  }
  for (let k = -9; k <= 73; k++) {
    const y = 94.5 + k * 10;
    const w = k % 10 === 0 ? 13 : k % 5 === 0 ? 10 : 4;
    rulerLeft += `<path d="M${13 - w} ${y}H13" stroke="${tickColor}"/>`;
    if (k % 10 === 0) rulerLeft += `<text transform="translate(9 ${y - 2}) rotate(-90)" font-size="9" fill="#8b8e92">${k * 10}</text>`;
  }
  document.getElementById("rulerTop").innerHTML = rulerTop;
  document.getElementById("rulerLeft").innerHTML = rulerLeft;
</script>
</body>
</html>
